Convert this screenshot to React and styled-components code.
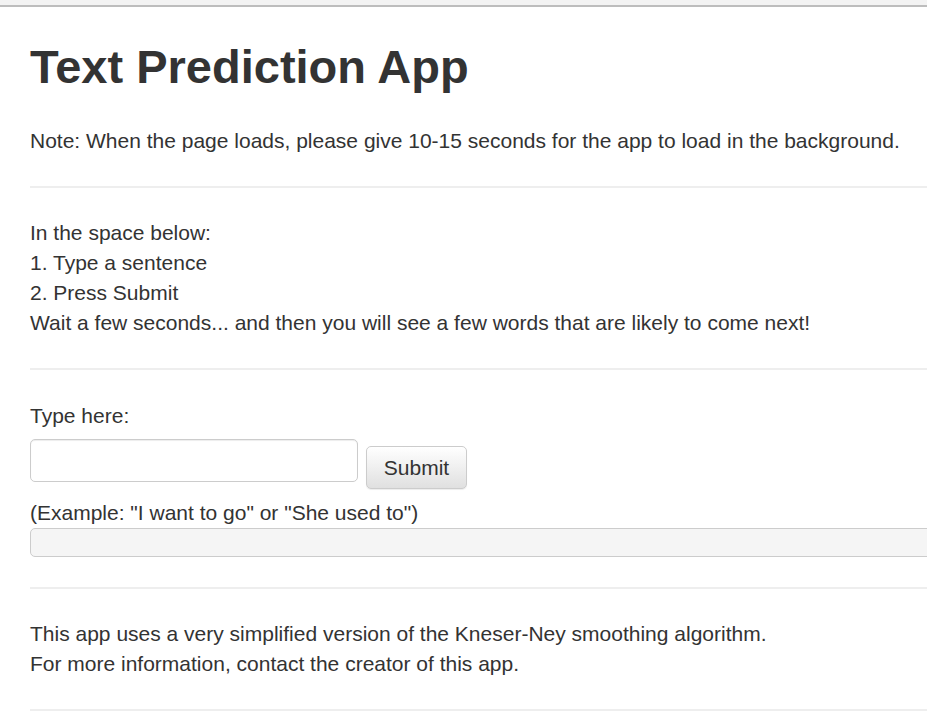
import React from "react";
import styled, { createGlobalStyle } from "styled-components";

const Global = createGlobalStyle`
  html, body { margin: 0; padding: 0; background: #fff; overflow: hidden; }
  body {
    font-family: "Liberation Sans", Arial, sans-serif;
    color: #333;
    font-size: 21px;
    line-height: 30px;
  }
  * { box-sizing: border-box; }
`;

const TopStrip = styled.div`
  height: 7px;
  background: #f3f3f3;
  border-bottom: 2px solid #bdbdbd;
`;

const Page = styled.div`
  padding-left: 30px;
  overflow: hidden;
`;

const Title = styled.h1`
  margin: 35px 0 0 0;
  font-size: 47px;
  line-height: 50px;
  font-weight: 700;
  color: #333;
`;

const Para = styled.p`
  margin: ${(p) => p.$mt || 0}px 0 0 0;
`;

const Rule = styled.hr`
  margin: 30px 0 0 0;
  border: 0;
  border-top: 2px solid #eee;
  height: 0;
`;

const Label = styled.div`
  margin-top: 31px;
`;

const InputRow = styled.div`
  display: flex;
  align-items: flex-start;
  gap: 8px;
  margin-top: 8px;
`;

const TextBox = styled.input`
  width: 328px;
  height: 43px;
  border: 1px solid #ccc;
  border-radius: 5px;
  box-shadow: inset 0 1px 1px rgba(0, 0, 0, 0.075);
  padding: 8px 14px;
  font: inherit;
  color: #555;
  outline: none;
`;

const Button = styled.button`
  margin-top: 7px;
  width: 101px;
  height: 43px;
  border: 1px solid #ccc;
  border-radius: 5px;
  background: linear-gradient(to bottom, #ffffff 0%, #e0e0e0 100%);
  box-shadow: inset 0 1px 0 rgba(255, 255, 255, 0.15), 0 1px 1px rgba(0, 0, 0, 0.075);
  font-family: "Liberation Sans", Arial, sans-serif;
  font-size: 21px;
  color: #333;
  padding: 0;
  cursor: pointer;
`;

const Example = styled.div`
  margin-top: 9px;
`;

const OutputBar = styled.pre`
  margin: 0;
  height: 29px;
  width: calc(100% + 20px);
  background: #f5f5f5;
  border: 1px solid #ccc;
  border-radius: 5px;
`;

export default function App() {
  return (
    <>
      <Global />
      <TopStrip />
      <Page>
        <Title>Text Prediction App</Title>
        <Para $mt={34}>
          Note: When the page loads, please give 10-15 seconds for the app to load in the background.
        </Para>
        <Rule />
        <Para $mt={30}>
          In the space below:
          <br />
          1. Type a sentence
          <br />
          2. Press Submit
          <br />
          Wait a few seconds... and then you will see a few words that are likely to come next!
        </Para>
        <Rule />
        <Label>Type here:</Label>
        <InputRow>
          <TextBox type="text" />
          <Button>Submit</Button>
        </InputRow>
        <Example>(Example: "I want to go" or "She used to")</Example>
        <OutputBar />
        <Rule />
        <Para $mt={30}>
          This app uses a very simplified version of the Kneser-Ney smoothing algorithm.
          <br />
          For more information, contact the creator of this app.
        </Para>
        <Rule />
      </Page>
    </>
  );
}
